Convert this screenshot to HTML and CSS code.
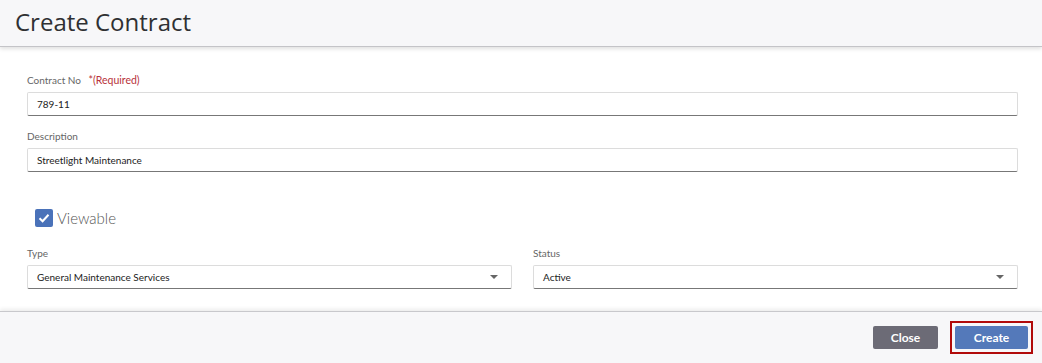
FILE: index.html
```html
<!DOCTYPE html>
<html lang="en">
<head>
    <meta charset="UTF-8">
    <title>Create Contract</title>
    <link rel="stylesheet" href="styles.css">
</head>
<body>
    <div class="modal">
        <div class="modal-header">
            <h1>Create Contract</h1>
        </div>

        <div class="modal-body">
            <div class="field">
                <label>Contract No <span class="required">*(Required)</span></label>
                <div class="input">789-11</div>
            </div>
            <div class="field">
                <label>Description</label>
                <div class="input">Streetlight Maintenance</div>
            </div>

            <div class="check-row">
                <span class="checkbox">
                    <svg width="12" height="10" viewBox="0 0 12 10"><path d="M1.5 5.2 L4.6 8.2 L10.5 1.8" fill="none" stroke="#fff" stroke-width="2"/></svg>
                </span>
                <span class="check-label">Viewable</span>
            </div>

            <div class="row">
                <div class="field">
                    <label>Type</label>
                    <div class="input select">General Maintenance Services <span class="caret"></span></div>
                </div>
                <div class="field">
                    <label>Status</label>
                    <div class="input select">Active <span class="caret"></span></div>
                </div>
            </div>
        </div>

        <div class="modal-footer">
            <button class="btn btn-close">Close</button>
            <span class="focus-ring"><button class="btn btn-create">Create</button></span>
        </div>
    </div>
</body>
</html>
```

FILE: styles.css
```css
* {
    margin: 0;
    padding: 0;
    box-sizing: border-box;
}
body {
    font-family: 'Lato', sans-serif;
    background: #fff;
    width: 1042px;
    height: 363px;
    overflow: hidden;
}
.modal {
    display: flex;
    flex-direction: column;
    height: 363px;
}
.modal-header {
    height: 47px;
    background: #f7f7f9;
    border-bottom: 1px solid #c4c4c8;
    box-shadow: 0 2px 4px rgba(0,0,0,0.12);
    padding-left: 15px;
    position: relative;
    z-index: 1;
}
.modal-header h1 {
    font-family: 'Open Sans', sans-serif;
    font-size: 24px;
    font-weight: 400;
    color: #2f3033;
    line-height: 44px;
}
.modal-body {
    flex: 1;
    padding: 26px 24px 0 27px;
}
.field {
    margin-bottom: 13px;
}
.field label {
    display: block;
    font-size: 10px;
    color: #666;
    line-height: 14px;
    margin-bottom: 5px;
}
.required {
    color: #b8323a;
    margin-left: 5px;
    font-size: 10.5px;
}
.input {
    height: 24px;
    border: 1px solid #dcdcdc;
    border-bottom: 1px solid #777;
    border-radius: 2px;
    padding: 0 9px;
    font-size: 10px;
    color: #222;
    display: flex;
    align-items: center;
    justify-content: space-between;
}
.caret {
    width: 0;
    height: 0;
    border-left: 4px solid transparent;
    border-right: 4px solid transparent;
    border-top: 4px solid #666;
    margin-right: 4px;
}
.check-row {
    display: flex;
    align-items: center;
    gap: 4px;
    margin: 36px 0 19px 8px;
    height: 19px;
}
.checkbox {
    width: 18px;
    height: 18px;
    background: #4a72b9;
    border-radius: 2px;
    display: flex;
    align-items: center;
    justify-content: center;
}
.check-label {
    font-size: 15px;
    color: #555;
    font-weight: 300;
}
.row {
    display: grid;
    grid-template-columns: 1fr 1fr;
    gap: 21px;
}
.modal-footer {
    height: 52px;
    background: #f7f7f9;
    border-top: 1px solid #c8c8cc;
    box-shadow: 0 -2px 4px rgba(0,0,0,0.08);
    display: flex;
    justify-content: flex-end;
    align-items: flex-start;
    gap: 12px;
    padding: 9px 9px 0 0;
}
.btn {
    height: 23px;
    border: none;
    border-radius: 2px;
    color: #fff;
    font-family: 'Lato', sans-serif;
    font-size: 12px;
    font-weight: bold;
    cursor: pointer;
}
.btn-close {
    width: 65px;
    background: #6c6b76;
    margin-top: 5px;
}
.focus-ring {
    display: flex;
    border: 2px solid #b10a0a;
    padding: 3px;
}
.btn-create {
    width: 73px;
    background: #5479ba;
}
```
